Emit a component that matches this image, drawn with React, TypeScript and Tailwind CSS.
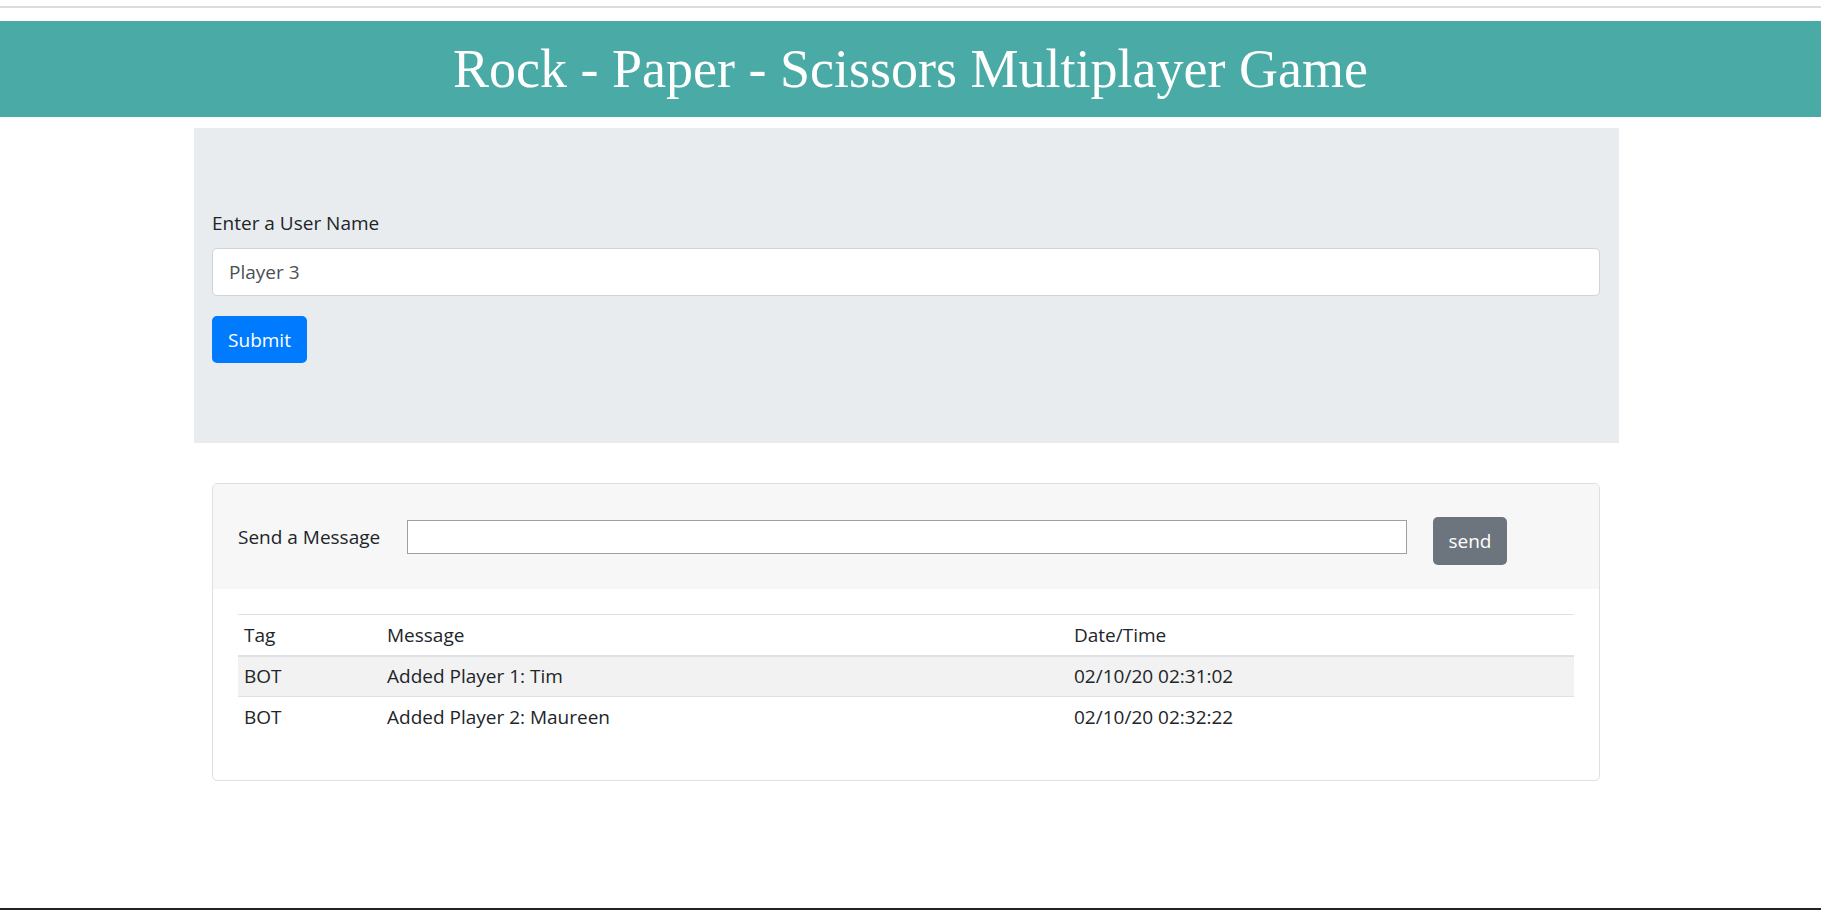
import React from "react";

const rows = [
  { tag: "BOT", msg: "Added Player 1: Tim", time: "02/10/20 02:31:02" },
  { tag: "BOT", msg: "Added Player 2: Maureen", time: "02/10/20 02:32:22" },
];

export default function App() {
  return (
    <div className="min-h-[910px] flex flex-col bg-white text-[#212529] font-['Open_Sans',sans-serif]">
      <div className="h-[6px]" />
      <div className="h-[2px] bg-[#dcdcdc]" />
      <header className="mt-[13px] h-[96px] bg-[#4aaaa5] flex items-center justify-center">
        <h1 className="text-white text-[54px] leading-none font-['Liberation_Serif',serif] font-normal">
          Rock - Paper - Scissors Multiplayer Game
        </h1>
      </header>

      <div className="mt-[11px] ml-[194px] w-[1425px] bg-[#e9ecef] pt-[80px] pb-[80px] pl-[18px] pr-[19px]">
        <label className="block text-[19px] leading-[30px] mb-[10px]">Enter a User Name</label>
        <input
          className="block w-full h-[48px] rounded-[5px] border border-[#ced4da] bg-white px-[16px] text-[19px] text-[#495057] outline-none"
          defaultValue="Player 3"
        />
        <button className="mt-[20px] h-[47px] w-[95px] rounded-[5px] bg-[#007bff] text-white text-[19px] leading-[30px]">
          Submit
        </button>
      </div>

      <div className="mt-[40px] ml-[212px] w-[1388px] border border-[#dfdfdf] rounded-[5px] overflow-hidden">
        <div className="h-[105px] bg-[#f7f7f7] flex items-center px-[25px]">
          <span className="text-[19px] leading-[30px] w-[144px] whitespace-nowrap">Send a Message</span>
          <input className="ml-[25px] w-[1000px] h-[34px] border border-[#a0a0a0] bg-white outline-none px-[4px] text-[19px]" />
          <button className="ml-[26px] mt-[8px] h-[48px] w-[74px] rounded-[5px] bg-[#6c757d] text-white text-[19px] leading-[30px]">
            send
          </button>
        </div>
        <div className="px-[25px] pt-[25px] pb-[42px]">
          <table className="w-full border-collapse text-[19px] leading-[30px] text-left">
            <thead>
              <tr className="border-t border-[#dee2e6] border-b-2 h-[41px]">
                <th className="w-[143px] pl-[6px] font-normal align-middle">Tag</th>
                <th className="w-[687px] pl-[6px] font-normal align-middle">Message</th>
                <th className="pl-[6px] font-normal align-middle">Date/Time</th>
              </tr>
            </thead>
            <tbody>
              {rows.map((r, i) => (
                <tr
                  key={i}
                  className={
                    "border-t border-[#dee2e6] h-[41px] " + (i % 2 === 0 ? "bg-[#f2f2f2]" : "bg-white")
                  }
                >
                  <td className="pl-[6px] align-middle">{r.tag}</td>
                  <td className="pl-[6px] align-middle">{r.msg}</td>
                  <td className="pl-[6px] align-middle">{r.time}</td>
                </tr>
              ))}
            </tbody>
          </table>
        </div>
      </div>

      <div className="mt-auto h-[2px] bg-[#222]" />
    </div>
  );
}
